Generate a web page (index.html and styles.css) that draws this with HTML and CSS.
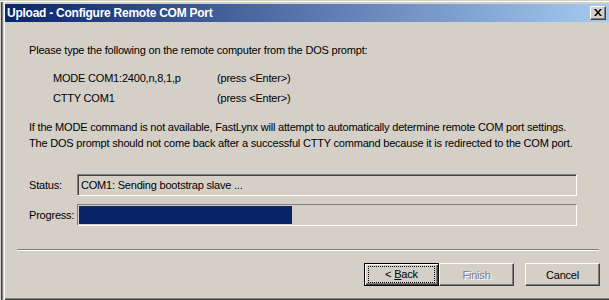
FILE: index.html
```html
<!DOCTYPE html>
<html lang="en">
<head>
    <meta charset="UTF-8">
    <title>Upload - Configure Remote COM Port</title>
    <link rel="stylesheet" href="styles.css">
</head>
<body>
    <div class="window">
        <div class="titlebar">
            <span class="title">Upload - Configure Remote COM Port</span>
            <span class="close">
                <svg width="8" height="7" viewBox="0 0 8 7"><path d="M0 0h2l2 2.5L6 0h2L5 3.5 8 7H6L4 4.5 2 7H0l3-3.5z" fill="#000"/></svg>
            </span>
        </div>
        <div class="content">
            <p class="intro">Please type the following on the remote computer from the DOS prompt:</p>
            <div class="commands">
                <span>MODE COM1:2400,n,8,1,p</span><span>(press &lt;Enter&gt;)</span>
                <span>CTTY COM1</span><span>(press &lt;Enter&gt;)</span>
            </div>
            <p class="note">
                If the MODE command is not available, FastLynx will attempt to automatically determine remote COM port settings.<br>
                The DOS prompt should not come back after a successful CTTY command because it is redirected to the COM port.
            </p>
            <div class="fields">
                <label>Status:</label>
                <div class="status-box">COM1: Sending bootstrap slave ...</div>
                <label>Progress:</label>
                <div class="progress-box"><div class="progress-fill" style="width: 213px;"></div></div>
            </div>
        </div>
        <div class="separator"></div>
        <div class="buttons">
            <div class="btn btn-default"><span class="focus">&lt; <u>B</u>ack</span></div>
            <div class="btn btn-disabled">Finish</div>
            <div class="btn btn-cancel">Cancel</div>
        </div>
    </div>
</body>
</html>
```

FILE: styles.css
```css
html, body {
    margin: 0;
    padding: 0;
    background: #d4d0c8;
    overflow: hidden;
}
body {
    font-family: 'Liberation Sans', Arial, sans-serif;
    font-size: 11px;
    letter-spacing: -0.2px;
    color: #000;
}
.window {
    margin-left: 1px;
    height: 300px;
    box-sizing: border-box;
    padding: 3px 0 0 4px;
    /* cadre de la fenetre */
    box-shadow: inset 1px 0 0 #404040, inset 2px 0 0 #808080, inset 3px 0 0 #d4d0c8, inset 4px 0 0 #fff,
                inset 0 -1px 0 #404040, inset 0 -2px 0 #808080;
    border-top: 1px solid #d4d0c8;
    position: relative;
}
.window::before {
    content: "";
    position: absolute;
    left: -1px;
    right: 0;
    top: 0;
    height: 1px;
    background: #fff;
}
.titlebar {
    height: 18px;
    display: flex;
    align-items: center;
    justify-content: space-between;
    padding: 0 3px 0 2px;
    background: linear-gradient(to right, #0a246a, #a6caf0);
}
.title {
    color: #fff;
    font-weight: bold;
    font-size: 12px;
    letter-spacing: -0.25px;
}
.close {
    width: 16px;
    height: 14px;
    box-sizing: border-box;
    background: #d4d0c8;
    border: 1px solid;
    border-color: #fff #404040 #404040 #fff;
    box-shadow: inset -1px -1px 0 #808080;
    display: flex;
    align-items: center;
    justify-content: center;
    padding: 0 1px 1px 0;
}
.close svg {
    display: block;
}
.content {
    padding: 0 0 0 24px;
}
.intro {
    margin: 20px 0 0;
    line-height: 16px;
}
.commands {
    display: grid;
    grid-template-columns: 164px auto;
    grid-auto-rows: 20px;
    align-items: center;
    margin: 10px 0 0 24px;
}
.note {
    margin: 11px 0 0;
    line-height: 16px;
}
.fields {
    display: grid;
    grid-template-columns: 48px 500px;
    grid-auto-rows: 22px;
    row-gap: 8px;
    align-items: center;
    margin-top: 23px;
}
.status-box {
    height: 22px;
    box-sizing: border-box;
    border: 1px solid;
    border-color: #808080 #fff #fff #808080;
    box-shadow: inset 1px 1px 0 #404040;
    padding: 0 0 0 3px;
    line-height: 20px;
    white-space: nowrap;
}
.progress-box {
    height: 22px;
    box-sizing: border-box;
    border: 1px solid;
    border-color: #808080 #fff #fff #808080;
    padding: 1px;
}
.progress-fill {
    height: 18px;
    background: #0a246a;
}
.separator {
    margin: 23px 10px 0 12px;
    height: 1px;
    background: #808080;
    border-bottom: 1px solid #fff;
}
.buttons {
    display: flex;
    justify-content: flex-end;
    margin: 12px 9px 0 0;
}
.btn {
    width: 75px;
    height: 23px;
    box-sizing: border-box;
    border: 1px solid;
    border-color: #fff #404040 #404040 #fff;
    box-shadow: inset -1px -1px 0 #808080;
    display: flex;
    align-items: center;
    justify-content: center;
}
.btn-default {
    border: 1px solid #000;
    box-shadow: inset 1px 1px 0 #fff, inset -1px -1px 0 #404040, inset -2px -2px 0 #808080;
}
.focus {
    box-sizing: border-box;
    width: 65px;
    height: 15px;
    outline: 1px dotted #000;
    text-align: center;
    line-height: 15px;
}
.btn-disabled {
    color: #808080;
    text-shadow: 1px 1px 0 #fff;
}
.btn-cancel {
    margin-left: 11px;
}
```
